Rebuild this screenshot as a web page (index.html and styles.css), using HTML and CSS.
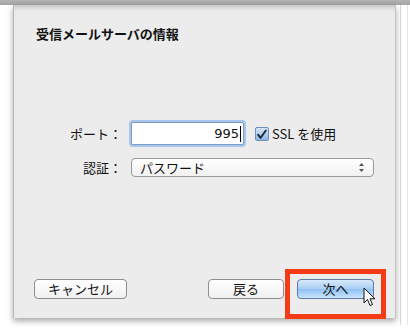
FILE: index.html
```html
<!DOCTYPE html>
<html lang="ja">
  <head>
    <meta charset="UTF-8" />
    <meta name="viewport" content="width=device-width, initial-scale=1.0" />
    <title>受信メールサーバの情報</title>
    <link rel="stylesheet" href="styles.css">
  </head>
  <body>
    <div class="topbar"></div>
    <div class="stage">
      <div class="sheet">
        <h1 class="title">受信メールサーバの情報</h1>
        <div class="form">
          <div class="row port-row">
            <label class="label">ポート：</label>
            <div class="port-input">995<span class="caret"></span></div>
            <div class="ssl">
              <span class="checkbox">
                <svg width="14" height="14" viewBox="0 0 14 14">
                  <path d="M2.5 6.8 L5.4 10.2 L11.5 1.8" fill="none" stroke="#1b2a3c" stroke-width="2.3" stroke-linecap="round" stroke-linejoin="round"/>
                </svg>
              </span>
              <span>SSL を使用</span>
            </div>
          </div>
          <div class="row auth-row">
            <label class="label">認証：</label>
            <div class="select">
              <span>パスワード</span>
              <svg class="arrows" width="7" height="11" viewBox="0 0 7 11">
                <path d="M3.5 1 L6 4 L1 4 Z M3.5 10 L6 7 L1 7 Z" fill="#555"/>
              </svg>
            </div>
          </div>
        </div>
        <div class="footer">
          <button class="btn cancel">キャンセル</button>
          <div class="nav">
            <button class="btn back">戻る</button>
            <button class="btn next">次へ</button>
          </div>
        </div>
        <div class="highlight"></div>
        <svg class="cursor" width="14" height="21" viewBox="0 0 14 21">
          <path d="M1 1 L1 16 L4.5 12.5 L7 18.5 L9.5 17.5 L7 11.8 L12 11.8 Z" fill="#fff" stroke="#111" stroke-width="1" stroke-linejoin="round"/>
        </svg>
      </div>
      <div class="edge"></div>
    </div>
  </body>
</html>
```

FILE: styles.css
```css
body {
  margin: 0;
  background-color: #ffffff;
  font-family: "Noto Sans CJK JP", "Noto Sans", sans-serif;
  color: #111;
  width: 410px;
  height: 331px;
  overflow: hidden;
}
.topbar {
  height: 5px;
  background: linear-gradient(#b3b3b3, #a3a3a3);
}
.stage {
  display: flex;
  padding-left: 13px;
}
.sheet {
  position: relative;
  width: 381px;
  height: 313px;
  background-color: #ececec;
  border-left: 1px solid #b8b8b8;
  border-right: 1px solid #c6c6c6;
  box-shadow: 0 3px 6px rgba(0, 0, 0, 0.35), inset 0 6px 6px -5px rgba(0, 0, 0, 0.25);
  display: flex;
  flex-direction: column;
}
.edge {
  width: 6px;
  margin-left: 4px;
  border-left: 1px solid #d9d9d9;
  border-right: 1px solid #e6e6e6;
  height: 320px;
}
.title {
  margin: 21px 0 0 22px;
  font-size: 13px;
  font-weight: bold;
  line-height: 16px;
}
.form {
  margin-top: 80px;
  display: flex;
  flex-direction: column;
  gap: 13px;
}
.row {
  display: flex;
  align-items: center;
}
.label {
  width: 108px;
  text-align: right;
  font-size: 13px;
  margin-right: 9px;
}
.port-input {
  box-sizing: border-box;
  width: 113px;
  height: 23px;
  background: #fff;
  border: 1px solid #7d9cc6;
  box-shadow: 0 0 0 2px #a7c4e9;
  border-radius: 2px;
  display: flex;
  align-items: center;
  justify-content: flex-end;
  padding-right: 2px;
  font-family: "DejaVu Sans", sans-serif;
  font-size: 13px;
}
.caret {
  width: 1px;
  height: 16px;
  background: #000;
  margin-left: 1px;
}
.ssl {
  display: flex;
  align-items: center;
  gap: 3px;
  margin-left: 11px;
  font-size: 13px;
}
.checkbox {
  box-sizing: border-box;
  width: 14px;
  height: 14px;
  border: 1px solid #6f8fb6;
  border-radius: 2px;
  background: linear-gradient(#d6e6f7, #8fb6e0);
  display: flex;
  overflow: visible;
}
.select {
  box-sizing: border-box;
  width: 243px;
  height: 19px;
  background: linear-gradient(#ffffff, #f1f1f1);
  border: 1px solid #9a9a9a;
  border-radius: 4px;
  display: flex;
  align-items: center;
  justify-content: space-between;
  padding: 0 8px;
  font-size: 13px;
}
.footer {
  margin-top: auto;
  margin-bottom: 19px;
  display: flex;
  justify-content: space-between;
  padding: 0 21px 0 20px;
}
.nav {
  display: flex;
  gap: 13px;
}
.btn {
  box-sizing: border-box;
  height: 20px;
  font-family: "Noto Sans CJK JP", sans-serif;
  font-size: 13px;
  line-height: 16px;
  padding: 0;
  border: 1px solid #8e8e8e;
  border-radius: 4px;
  background: linear-gradient(#ffffff, #f0f0f0);
  color: #111;
}
.cancel {
  width: 93px;
}
.back {
  width: 76px;
}
.next {
  width: 77px;
  border-color: #5d7ba3;
  background: linear-gradient(#d8e9fb, #a8cdf4 50%, #8fc0f3 51%, #c9e3fc);
}
.highlight {
  position: absolute;
  left: 271px;
  top: 264px;
  width: 91px;
  height: 40px;
  border: 5px solid #f43b14;
}
.cursor {
  position: absolute;
  left: 349px;
  top: 282px;
}
```
